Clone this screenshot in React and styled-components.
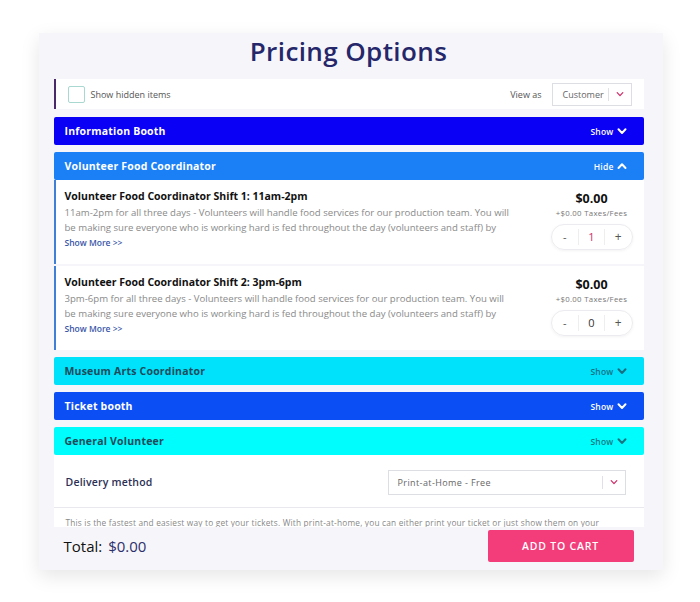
import React from 'react';
import styled, { createGlobalStyle } from 'styled-components';

const GlobalStyle = createGlobalStyle`
	body {
		margin: 0;
		background: #ffffff;
		font-family: 'Open Sans', 'Noto Sans', sans-serif;
	}
`;

const Page = styled.div`
	width: 700px;
	height: 602px;
	padding-top: 33px;
	box-sizing: border-box;
	display: flex;
	justify-content: center;
`;

const Card = styled.div`
	width: 624px;
	height: 537px;
	margin-left: 1px;
	background: #f6f6fa;
	box-shadow: 0 6px 18px rgba(0, 0, 0, 0.1);
	display: flex;
	flex-direction: column;
	padding: 0 19px 0 15px;
	box-sizing: border-box;
`;

const Title = styled.h1`
	margin: 0;
	height: 46px;
	display: flex;
	align-items: center;
	justify-content: center;
	font-size: 26px;
	font-weight: 600;
	color: #25276a;
	letter-spacing: 0.4px;
	padding-bottom: 10px;
	box-sizing: border-box;
`;

const Scroll = styled.div`
	height: 448px;
	overflow: hidden;
`;

const Toolbar = styled.div`
	height: 30px;
	background: #fff;
	border-left: 2px solid #4a2a6a;
	display: flex;
	align-items: center;
	padding: 0 12px 0 12px;
	margin-bottom: 8px;
	font-size: 9px;
	color: #555;
`;

const Check = styled.span`
	width: 15px;
	height: 15px;
	border: 1.5px solid #a8d8cf;
	border-radius: 2px;
	margin-right: 6px;
`;

const Spacer = styled.div`
	flex: 1;
`;

const SelectBox = styled.div`
	height: ${({ h }) => h}px;
	width: ${({ w }) => w}px;
	border: 1px solid #dddde4;
	background: #fff;
	display: flex;
	align-items: center;
	box-sizing: border-box;
	padding-left: ${({ pl }) => pl}px;
	color: #666;
	font-size: ${({ fs }) => fs}px;
	letter-spacing: ${({ ls }) => ls || 0}px;
`;

const SelectDivider = styled.span`
	width: 1px;
	height: 13px;
	background: #e0e0e6;
	margin-left: auto;
`;

const Chevron = ({ color, size = 9, up, stroke = 2 }) => (
	<svg width={size} height={size} viewBox="0 0 10 10" style={{ display: 'block' }}>
		<path
			d={up ? 'M1.5 7 L5 3.3 L8.5 7' : 'M1.5 3.3 L5 7 L8.5 3.3'}
			fill="none"
			stroke={color}
			strokeWidth={stroke}
			strokeLinecap="round"
			strokeLinejoin="round"
		/>
	</svg>
);

const ChevronSlot = styled.span`
	width: ${({ w }) => w}px;
	display: flex;
	justify-content: center;
`;

const Group = styled.div`
	margin-bottom: 7px;
`;

const Header = styled.div`
	height: 28px;
	background: ${({ bg }) => bg};
	color: ${({ fg }) => fg};
	border-radius: 2px;
	display: flex;
	align-items: center;
	padding: 0 17px 0 11px;
	font-size: 10.5px;
	font-weight: 700;
	letter-spacing: 0.2px;
`;

const Toggle = styled.span`
	display: flex;
	align-items: center;
	gap: 3px;
	margin-left: auto;
	font-size: 8.5px;
	font-weight: 600;
	opacity: ${({ dim }) => (dim ? 0.75 : 1)};
`;

const Item = styled.div`
	background: #fff;
	border-left: 2px solid #3f7fd6;
	height: 84px;
	box-sizing: border-box;
	display: flex;
	padding: 9px 10px 0 9px;
	& + & {
		margin-top: 2px;
	}
`;

const ItemText = styled.div`
	width: 452px;
`;

const ItemTitle = styled.div`
	font-size: 10.5px;
	font-weight: 700;
	color: #111;
	line-height: 15px;
`;

const ItemDesc = styled.div`
	font-size: 9.6px;
	color: #8a8a8a;
	line-height: 15px;
	height: 30px;
	overflow: hidden;
	margin-top: 1px;
`;

const ShowMore = styled.div`
	font-size: 8.5px;
	color: #3a56a8;
	margin-top: 2px;
	font-weight: 600;
`;

const PriceCol = styled.div`
	margin-left: auto;
	width: 84px;
	display: flex;
	flex-direction: column;
	align-items: center;
`;

const Price = styled.div`
	font-size: 12.5px;
	font-weight: 700;
	color: #111;
	margin-top: 1px;
`;

const Fees = styled.div`
	font-size: 7.8px;
	color: #777;
	margin-top: 1px;
	letter-spacing: 0.3px;
	white-space: nowrap;
`;

const Stepper = styled.div`
	margin-top: 6px;
	width: 82px;
	height: 26px;
	border: 1px solid #ececf0;
	border-radius: 13px;
	box-sizing: border-box;
	display: grid;
	grid-template-columns: 1fr 1fr 1fr;
	align-items: center;
	box-shadow: 0 1px 3px rgba(0, 0, 0, 0.05);
`;

const StepCell = styled.span`
	text-align: center;
	font-size: ${({ big }) => (big ? 12 : 11)}px;
	color: ${({ color }) => color};
	border-left: ${({ mid }) => (mid ? '1px solid #eee' : 'none')};
	border-right: ${({ mid }) => (mid ? '1px solid #eee' : 'none')};
	line-height: 16px;
`;

const Delivery = styled.div`
	background: #fff;
`;

const DeliveryRow = styled.div`
	height: 53px;
	display: flex;
	align-items: center;
	padding: 2px 18px 0 12px;
	box-sizing: border-box;
	border-bottom: 1px solid #e8e8ee;
`;

const DeliveryLabel = styled.div`
	font-size: 10.5px;
	font-weight: 600;
	color: #2b2f55;
	letter-spacing: 0.2px;
`;

const DeliveryNote = styled.div`
	font-size: 8.3px;
	color: #888;
	padding: 9px 12px;
	white-space: nowrap;
	letter-spacing: 0.2px;
`;

const Footer = styled.div`
	flex: 1;
	display: flex;
	align-items: center;
	padding: 0 10px 6px 10px;
`;

const Total = styled.div`
	font-size: 15px;
	color: #111;
	span {
		color: #2d2f6b;
		margin-left: 6px;
	}
`;

const CartButton = styled.button`
	margin-left: auto;
	width: 146px;
	height: 32px;
	border: none;
	border-radius: 2px;
	background: #f33d7b;
	color: #fff;
	font-family: inherit;
	font-size: 10.5px;
	font-weight: 600;
	letter-spacing: 0.8px;
`;

const sections = [
	{ name: 'Information Booth', bg: '#0a00f6', fg: '#fff' },
	{ name: 'Volunteer Food Coordinator', bg: '#1b7ff6', fg: '#fff', open: true },
	{ name: 'Museum Arts Coordinator', bg: '#00e1fb', fg: '#1f4a5a', dim: true },
	{ name: 'Ticket booth', bg: '#0a4ef4', fg: '#fff' },
	{ name: 'General Volunteer', bg: '#00fdfd', fg: '#1f4a5a', dim: true },
];

const items = [
	{
		title: 'Volunteer Food Coordinator Shift 1: 11am-2pm',
		desc: '11am-2pm for all three days - Volunteers will handle food services for our production team. You will be making sure everyone who is working hard is fed throughout the day (volunteers and staff) by',
		qty: 1,
	},
	{
		title: 'Volunteer Food Coordinator Shift 2: 3pm-6pm',
		desc: '3pm-6pm for all three days - Volunteers will handle food services for our production team. You will be making sure everyone who is working hard is fed throughout the day (volunteers and staff) by',
		qty: 0,
	},
];

export default function App() {
	return (
		<Page>
			<GlobalStyle />
			<Card>
				<Title>Pricing Options</Title>
				<Scroll>
					<Toolbar>
						<Check />
						Show hidden items
						<Spacer />
						<span style={{ marginRight: 10 }}>View as</span>
						<SelectBox h={23} w={80} pl={10} fs={9}>
							Customer
							<SelectDivider />
							<ChevronSlot w={22}>
								<Chevron color="#d0306a" size={8} stroke={1.6} />
							</ChevronSlot>
						</SelectBox>
					</Toolbar>
					{sections.map((s) => (
						<Group key={s.name}>
							<Header bg={s.bg} fg={s.fg}>
								{s.name}
								<Toggle dim={s.dim}>
									{s.open ? 'Hide' : 'Show'}
									<Chevron color={s.fg} size={10} up={s.open} stroke={2} />
								</Toggle>
							</Header>
							{s.open &&
								items.map((it) => (
									<Item key={it.title}>
										<ItemText>
											<ItemTitle>{it.title}</ItemTitle>
											<ItemDesc>{it.desc}</ItemDesc>
											<ShowMore>Show More &gt;&gt;</ShowMore>
										</ItemText>
										<PriceCol>
											<Price>$0.00</Price>
											<Fees>+$0.00 Taxes/Fees</Fees>
											<Stepper>
												<StepCell color="#555">-</StepCell>
												<StepCell mid color={it.qty ? '#d0306a' : '#333'}>
													{it.qty}
												</StepCell>
												<StepCell color="#555" big>
													+
												</StepCell>
											</Stepper>
										</PriceCol>
									</Item>
								))}
							{s.name === 'General Volunteer' && (
								<Delivery>
									<DeliveryRow>
										<DeliveryLabel>Delivery method</DeliveryLabel>
										<Spacer />
										<SelectBox h={25} w={238} pl={9} fs={9} ls={0.4}>
											Print-at-Home - Free
											<SelectDivider />
											<ChevronSlot w={22}>
												<Chevron color="#d0306a" size={8} stroke={1.6} />
											</ChevronSlot>
										</SelectBox>
									</DeliveryRow>
									<DeliveryNote>
										This is the fastest and easiest way to get your tickets. With print-at-home, you can either print your ticket or just show them on your
									</DeliveryNote>
								</Delivery>
							)}
						</Group>
					))}
				</Scroll>
				<Footer>
					<Total>
						Total:<span>$0.00</span>
					</Total>
					<CartButton>ADD TO CART</CartButton>
				</Footer>
			</Card>
		</Page>
	);
}
